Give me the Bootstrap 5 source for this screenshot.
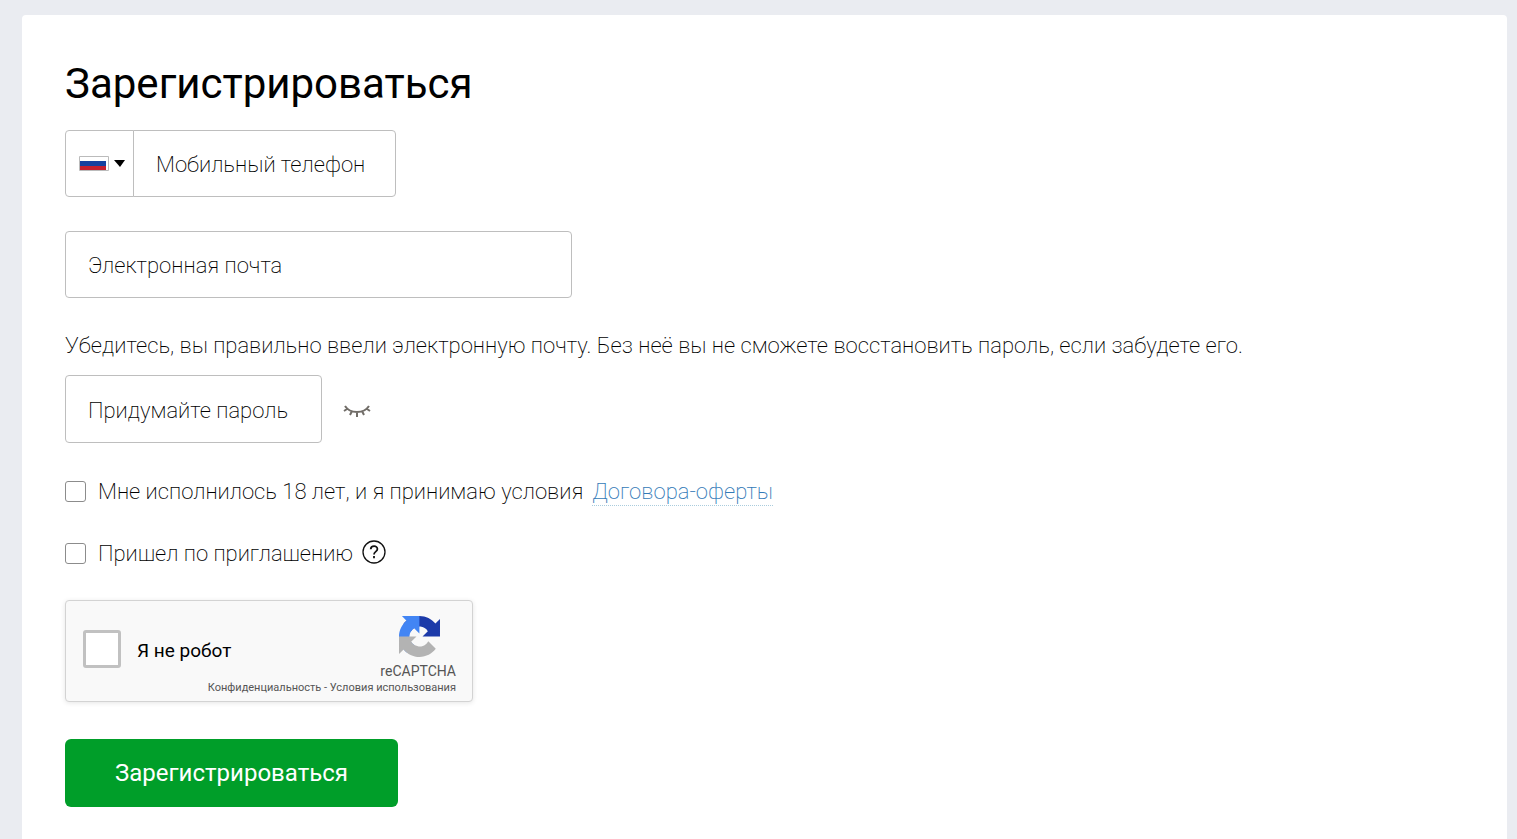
<!DOCTYPE html>
<html lang="ru">
<head>
<meta charset="utf-8">
<meta name="viewport" content="width=device-width, initial-scale=1">
<title>Регистрация</title>
<link href="https://cdn.jsdelivr.net/npm/bootstrap@5.3.0/dist/css/bootstrap.min.css" rel="stylesheet">
<style>
  body { background: #eaecf1; color: #000; font-family: Roboto, sans-serif; font-size: 22px; font-weight: 200; line-height: 32px; }
  .page { padding: 15px 10px 0 22px; }
  .panel { background: #fff; border-radius: 4px 4px 0 0; padding: 43px 43px 32px; }
  .page-title { font-size: 42px; font-weight: 400; line-height: 52px; margin-bottom: 20px; }
  .field { height: 67px; border: 1px solid #bebebe; border-radius: 4px; padding: 2px 22px 0; font-size: 22px; font-weight: 200; color: #000; }
  .field::placeholder { color: #000; opacity: 1; }
  .phone-group { max-width: 331px; margin-bottom: 34px; }
  .country { width: 69px; border: 1px solid #bebebe; border-radius: 4px; background: #fff; gap: 5px; padding: 0 0 0 5px; }
  .email { max-width: 507px; margin-bottom: 32px; }
  .hint { margin-bottom: 13px; }
  .password-row { gap: 20px; margin-bottom: 33px; }
  .password { width: 257px; height: 68px; }
  .eye { padding: 3px 0 0; }
  .option { gap: 9px; margin-bottom: 30px; }
  .option .form-check-input { width: 21px; height: 21px; margin: 0 3px 2px 0; border: 1px solid #8c8c8c; border-radius: 3px; }
  .offer { color: #337ab7; text-decoration: none; border-bottom: 1px dotted #acd; line-height: 26px; }
  .captcha { max-width: 408px; min-height: 102px; background: #f9f9f9; border: 1px solid #d3d3d3; border-radius: 4px; box-shadow: 0 1px 5px rgba(0,0,0,.1); padding: 15px 16px 0 17px; margin-bottom: 37px; }
  .captcha .form-check-input { width: 38px; height: 38px; border: 3px solid #c1c1c1; border-radius: 3px; margin: 0; }
  .robot-check { padding-bottom: 12px; }
  .robot { font-size: 19px; font-weight: 400; line-height: 24px; padding-top: 4px; }
  .captcha-brand { font-size: 14px; font-weight: 400; line-height: 18px; color: #555; }
  .captcha-logo { margin: 0 16px 5px 0; }
  .captcha-links { color: #555; font-size: 11px; font-weight: 400; line-height: 16px; text-align: right; }
  .captcha-links a { color: #555; text-decoration: none; }
  .submit { width: 333px; height: 68px; max-width: 100%; background: #009e29; color: #fff; border: 0; border-radius: 6px; font-size: 24px; font-weight: 400; }
  .submit:hover { background: #008a24; color: #fff; }
</style>
</head>
<body>
<div class="page min-vh-100 d-flex">
  <main class="panel flex-grow-1">
    <h1 class="page-title">Зарегистрироваться</h1>
    <form>
      <div class="input-group phone-group">
        <button type="button" class="country btn d-flex align-items-center justify-content-center" aria-label="Выбрать страну">
          <svg width="30" height="16" viewBox="0 0 30 16" aria-hidden="true"><path fill="#fff" stroke="#bbb" d="M.5.5h29v14H.5z"/><path fill="#1541a0" d="M1 5h26v5H1z"/><path fill="#c4202f" d="M1 10h26v4H1z"/></svg>
          <svg width="12" height="8" viewBox="0 0 12 8" aria-hidden="true"><path d="M0 0h11L6 7z"/></svg>
        </button>
        <input id="phone" type="tel" class="field form-control" placeholder="Мобильный телефон" aria-label="Мобильный телефон">
      </div>
      <input id="email" type="email" class="field email form-control" placeholder="Электронная почта" aria-label="Электронная почта">
      <p class="hint">Убедитесь, вы правильно ввели электронную почту. Без неё вы не сможете восстановить пароль, если забудете его.</p>
      <div class="password-row d-flex align-items-center">
        <input id="password" type="password" class="field password form-control" placeholder="Придумайте пароль" aria-label="Придумайте пароль">
        <button type="button" class="eye btn border-0 d-flex" aria-label="Показать пароль">
          <svg width="30" height="16" viewBox="0 0 30 16" fill="none" stroke="#716d68" stroke-width="2" aria-hidden="true"><path d="M3 3c5 8 19 8 24 0M5 6l-3 2M10 8l-2 4M15 9v5M20 8l2 4M25 6l3 2"/></svg>
        </button>
      </div>
      <div class="option d-flex align-items-center">
        <input id="terms" type="checkbox" class="form-check-input flex-shrink-0">
        <label for="terms">Мне исполнилось 18 лет, и я принимаю условия</label>
        <a href="#offer" class="offer">Договора-оферты</a>
      </div>
      <div class="option d-flex align-items-center">
        <input id="invited" type="checkbox" class="form-check-input flex-shrink-0">
        <label for="invited">Пришел по приглашению</label>
        <svg width="24" height="28" viewBox="0 0 24 28" fill="none" stroke="#111" aria-hidden="true"><circle cx="12" cy="12" r="11" stroke-width="1.3"/><path stroke-width="1.8" d="M8.700 9.300c.2-4.200 6.700-4 6.700-.3 0 2.700-3.400 2.500-3.400 5.400M12 16v2.200"/></svg>
      </div>
      <div class="captcha">
        <div class="d-flex justify-content-between align-items-end">
          <div class="robot-check d-flex align-items-center gap-3">
            <input id="robot" type="checkbox" class="form-check-input">
            <label for="robot" class="robot">Я не робот</label>
          </div>
          <div class="captcha-brand d-flex flex-column align-items-end">
            <svg class="captcha-logo" width="41" height="41" viewBox="0 0 64 64" aria-hidden="true">
              <path fill="#1c3aa9" d="M64 31.955l-.033-1.370V4.687l-7.160 7.160C50.948 4.674 42.033.093 32.050.093c-10.400 0-19.622 4.960-25.458 12.640l11.736 11.860a15.550 15.550 0 0 1 4.754-5.334c2.050-1.600 4.952-2.906 8.968-2.906.485 0 .860.057 1.135.163 4.976.393 9.288 3.140 11.828 7.124l-8.307 8.307L64 31.953z"/>
              <path fill="#4285f4" d="M31.862.094l-1.370.033H4.594l7.160 7.160C4.580 13.147 0 22.060 0 32.046c0 10.400 4.960 19.622 12.640 25.458L24.500 45.768a15.550 15.550 0 0 1-5.334-4.754c-1.600-2.050-2.906-4.952-2.906-8.968 0-.485.057-.860.163-1.135.393-4.976 3.140-9.288 7.124-11.828l8.307 8.307z"/>
              <path fill="#b3b3b3" d="M.001 32.045l.033 1.370v25.898l7.160-7.160c5.860 7.173 14.774 11.754 24.760 11.754 10.400 0 19.622-4.960 25.458-12.640l-11.736-11.860a15.550 15.550 0 0 1-4.754 5.334c-2.050 1.600-4.952 2.906-8.968 2.906-.485 0-.860-.057-1.135-.163-4.976-.393-9.288-3.140-11.828-7.124l8.307-8.307z"/>
            </svg>
            <span>reCAPTCHA</span>
          </div>
        </div>
        <div class="captcha-links"><a href="#privacy">Конфиденциальность</a> - <a href="#rules">Условия использования</a></div>
      </div>
      <button type="submit" class="submit btn">Зарегистрироваться</button>
    </form>
  </main>
</div>
<script src="https://cdn.jsdelivr.net/npm/bootstrap@5.3.0/dist/js/bootstrap.bundle.min.js"></script>
</body>
</html>
